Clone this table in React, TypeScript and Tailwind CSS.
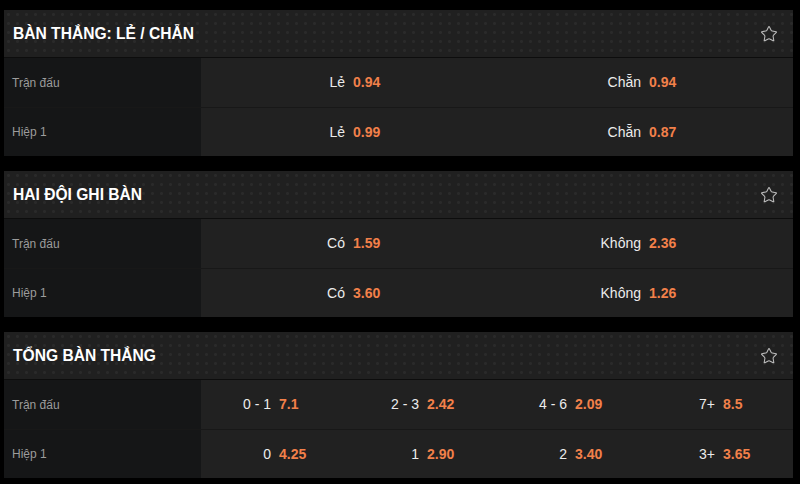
import React from 'react';
import { Star } from 'lucide-react';

type Cell = { label: string; odds: string };
type Row = { name: string; cells: Cell[] };
type Market = { title: string; rows: Row[] };

const markets: Market[] = [
  {
    title: 'BÀN THẮNG: LẺ / CHẴN',
    rows: [
      { name: 'Trận đấu', cells: [{ label: 'Lẻ', odds: '0.94' }, { label: 'Chẵn', odds: '0.94' }] },
      { name: 'Hiệp 1', cells: [{ label: 'Lẻ', odds: '0.99' }, { label: 'Chẵn', odds: '0.87' }] },
    ],
  },
  {
    title: 'HAI ĐỘI GHI BÀN',
    rows: [
      { name: 'Trận đấu', cells: [{ label: 'Có', odds: '1.59' }, { label: 'Không', odds: '2.36' }] },
      { name: 'Hiệp 1', cells: [{ label: 'Có', odds: '3.60' }, { label: 'Không', odds: '1.26' }] },
    ],
  },
  {
    title: 'TỔNG BÀN THẮNG',
    rows: [
      {
        name: 'Trận đấu',
        cells: [
          { label: '0 - 1', odds: '7.1' },
          { label: '2 - 3', odds: '2.42' },
          { label: '4 - 6', odds: '2.09' },
          { label: '7+', odds: '8.5' },
        ],
      },
      {
        name: 'Hiệp 1',
        cells: [
          { label: '0', odds: '4.25' },
          { label: '1', odds: '2.90' },
          { label: '2', odds: '3.40' },
          { label: '3+', odds: '3.65' },
        ],
      },
    ],
  },
];

function MarketCard({ market }: { market: Market }) {
  const cols = market.rows[0].cells.length === 4 ? 'grid-cols-4' : 'grid-cols-2';
  return (
    <div className="flex flex-col">
      {/* Header */}
      <div className="h-[48px] flex items-center justify-between pl-[9px] pr-[15px] bg-[#202020] bg-[radial-gradient(circle,#2a2a2a_1.2px,transparent_1.8px)] bg-[length:9px_9px] border-b border-[#0d0d0d]">
        <h2 className="text-white font-bold text-[15.6px]">{market.title}</h2>
        <Star size={18} strokeWidth={1.4} className="text-[#bdbdbd]" />
      </div>

      {/* Rows */}
      {market.rows.map((row, i) => (
        <div key={row.name} className={`flex ${i > 0 ? 'h-[49px] border-t border-[#181818]' : 'h-[49px]'}`}>
          <div className="w-[197px] bg-[#151617] flex items-center pl-[8px] text-[12px] text-[#9c9c9c]">
            {row.name}
          </div>
          <div className={`flex-1 grid ${cols} bg-[#212121]`}>
            {row.cells.map((c) => (
              <div key={c.label} className="grid grid-cols-2 items-center text-[14px]">
                <span className="text-right pr-[4px] text-[#ececec]">{c.label}</span>
                <span className="text-left pl-[4px] font-bold text-[#f2804a]">{c.odds}</span>
              </div>
            ))}
          </div>
        </div>
      ))}
    </div>
  );
}

export default function App() {
  return (
    <div className="w-[800px] h-[484px] bg-black pt-[10px] pl-[4px] pr-[7px] flex flex-col gap-[15px] font-['Liberation_Sans',Arial,sans-serif] overflow-hidden">
      {markets.map((m) => (
        <MarketCard key={m.title} market={m} />
      ))}
    </div>
  );
}
